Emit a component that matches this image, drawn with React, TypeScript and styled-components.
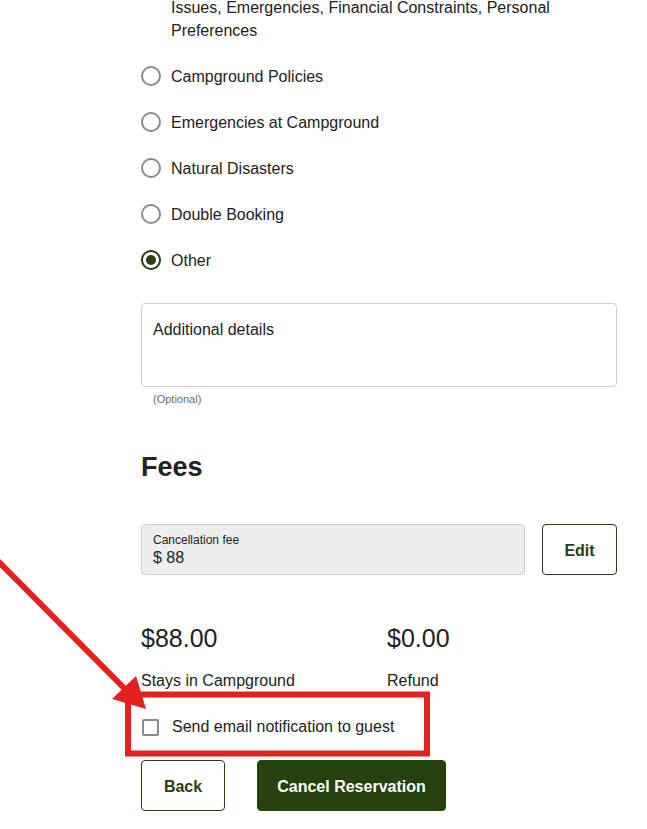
import React from "react";
import styled, { createGlobalStyle } from "styled-components";

const GREEN = "#26400f";
const TEXT = "#222222";

const Global = createGlobalStyle`
  html, body { margin: 0; padding: 0; background: #fff; }
  body { font-family: "Liberation Sans", Arial, sans-serif; color: ${TEXT}; }
  * { box-sizing: border-box; }
`;

const Page = styled.div`
  position: relative;
  width: 647px;
  height: 829px;
  overflow: hidden;
`;

const Content = styled.div`
  width: 476px;
  margin: -4.5px 0 0 141px;
  display: flex;
  flex-direction: column;
`;

const RadioGroup = styled.div`
  display: flex;
  flex-direction: column;
  gap: 23px;
`;

const Continuation = styled.div`
  padding-left: 30px;
  font-size: 16px;
  line-height: 23px;
`;

const OptionRow = styled.label`
  display: flex;
  align-items: center;
  gap: 10px;
  font-size: 16px;
  line-height: 23px;
`;

const Radio = styled.span<{ $checked?: boolean }>`
  width: 20px;
  height: 20px;
  border-radius: 50%;
  border: 2px solid ${(p) => (p.$checked ? GREEN : "#8a8a8a")};
  display: flex;
  align-items: center;
  justify-content: center;
  flex-shrink: 0;
  &::after {
    content: "";
    display: ${(p) => (p.$checked ? "block" : "none")};
    width: 10px;
    height: 10px;
    border-radius: 50%;
    background: ${GREEN};
  }
`;

const TextArea = styled.textarea`
  margin-top: 31.5px;
  width: 476px;
  height: 84px;
  border: 1px solid #cfcfcf;
  border-radius: 4px;
  padding: 16px 11px 0;
  font-family: inherit;
  font-size: 16px;
  line-height: 20px;
  color: ${TEXT};
  resize: none;
  outline: none;
  &::placeholder { color: ${TEXT}; opacity: 1; }
`;

const Hint = styled.div`
  margin-top: 5.5px;
  padding-left: 12px;
  font-size: 11px;
  line-height: 13px;
  color: #6b6b6b;
`;

const Heading = styled.h2`
  margin: 45.5px 0 0;
  font-size: 27px;
  line-height: 32px;
  font-weight: 700;
`;

const FeeRow = styled.div`
  margin-top: 41px;
  display: flex;
  gap: 17px;
`;

const FeeField = styled.div`
  flex: 1;
  height: 51px;
  background: #eeeeee;
  border: 1px solid #cfcfcf;
  border-radius: 4px;
  padding: 8px 11px;
  display: flex;
  flex-direction: column;
`;

const FeeLabel = styled.span`
  font-size: 12px;
  line-height: 14px;
`;

const FeeValue = styled.span`
  margin-top: 1px;
  font-size: 16px;
  line-height: 20px;
`;

const Button = styled.button<{ $primary?: boolean; $w: number }>`
  width: ${(p) => p.$w}px;
  height: 51px;
  border-radius: 4px;
  border: 1px solid ${GREEN};
  background: ${(p) => (p.$primary ? GREEN : "#fff")};
  color: ${(p) => (p.$primary ? "#fff" : GREEN)};
  font-family: inherit;
  font-size: 16px;
  font-weight: 700;
  padding: 2px 0 0;
  cursor: pointer;
  flex-shrink: 0;
`;

const Summary = styled.div`
  margin-top: 48px;
  display: grid;
  grid-template-columns: 1fr 1fr;
  column-gap: 16px;
  row-gap: 18px;
`;

const Amount = styled.div`
  font-size: 25px;
  line-height: 30px;
`;

const AmountLabel = styled.div`
  font-size: 16px;
  line-height: 20px;
`;

const CheckRow = styled.label`
  margin-top: 26px;
  display: flex;
  align-items: center;
  gap: 13px;
  font-size: 16px;
  line-height: 20px;
`;

const Checkbox = styled.span`
  width: 17px;
  height: 17px;
  border: 2px solid #8a8a8a;
  border-radius: 2px;
  margin-left: 1px;
  flex-shrink: 0;
`;

const Actions = styled.div`
  margin-top: 23px;
  display: flex;
  gap: 32px;
`;

const Annotation = styled.svg`
  position: absolute;
  left: 0;
  top: 0;
  pointer-events: none;
`;

const options = [
  { label: "Campground Policies" },
  { label: "Emergencies at Campground" },
  { label: "Natural Disasters" },
  { label: "Double Booking" },
  { label: "Other", checked: true },
];

export default function App() {
  return (
    <Page>
      <Global />
      <Content>
        <RadioGroup>
          <Continuation>
            Issues, Emergencies, Financial Constraints, Personal
            <br />
            Preferences
          </Continuation>
          {options.map((o) => (
            <OptionRow key={o.label}>
              <Radio $checked={o.checked} />
              {o.label}
            </OptionRow>
          ))}
        </RadioGroup>
        <TextArea placeholder="Additional details" />
        <Hint>(Optional)</Hint>
        <Heading>Fees</Heading>
        <FeeRow>
          <FeeField>
            <FeeLabel>Cancellation fee</FeeLabel>
            <FeeValue>$ 88</FeeValue>
          </FeeField>
          <Button $w={75}>Edit</Button>
        </FeeRow>
        <Summary>
          <Amount>$88.00</Amount>
          <Amount>$0.00</Amount>
          <AmountLabel>Stays in Campground</AmountLabel>
          <AmountLabel>Refund</AmountLabel>
        </Summary>
        <CheckRow>
          <Checkbox />
          Send email notification to guest
        </CheckRow>
        <Actions>
          <Button $w={84}>Back</Button>
          <Button $w={189} $primary>
            Cancel Reservation
          </Button>
        </Actions>
      </Content>
      <Annotation width="647" height="829" viewBox="0 0 647 829">
        <rect x="128" y="694.5" width="299" height="59" fill="none" stroke="#e5211f" strokeWidth="6" />
        <line x1="-2" y1="561" x2="126" y2="690" stroke="#e5211f" strokeWidth="6" />
        <polygon points="146,709 112,699 136,676" fill="#e5211f" />
      </Annotation>
    </Page>
  );
}
